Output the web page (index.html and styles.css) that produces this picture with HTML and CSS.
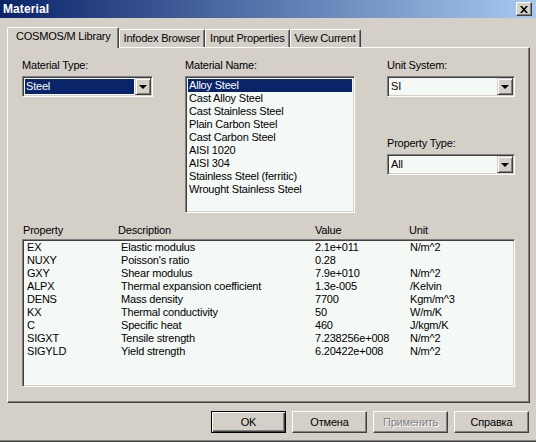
FILE: index.html
```html
<!DOCTYPE html>
<html>
<head>
<meta charset="utf-8">
<link rel="stylesheet" href="styles.css">
</head>
<body>
<div class="window">
  <div class="titlebar">
    <span class="title">Material</span>
    <span class="close"><svg width="8" height="7" viewBox="0 0 8 7"><path d="M0 0h2l2 2.2L6 0h2L5 3.5 8 7H6L4 4.8 2 7H0l3-3.5z" fill="#000"/></svg></span>
  </div>
  <div class="tabstrip">
    <div class="tab active">COSMOS/M Library</div>
    <div class="tab">Infodex Browser</div>
    <div class="tab">Input Properties</div>
    <div class="tab">View Current</div>
  </div>
  <div class="panel">
    <div class="top">
      <div class="col col1">
        <div class="label">Material Type:</div>
        <div class="combo">
          <div class="field"><span class="value sel">Steel</span></div>
          <div class="arrow"><i></i></div>
        </div>
      </div>
      <div class="col col2">
        <div class="label">Material Name:</div>
        <div class="listbox">
          <div class="item sel">Alloy Steel</div>
          <div class="item">Cast Alloy Steel</div>
          <div class="item">Cast Stainless Steel</div>
          <div class="item">Plain Carbon Steel</div>
          <div class="item">Cast Carbon Steel</div>
          <div class="item">AISI 1020</div>
          <div class="item">AISI 304</div>
          <div class="item">Stainless Steel (ferritic)</div>
          <div class="item">Wrought Stainless Steel</div>
        </div>
      </div>
      <div class="col col3">
        <div class="label">Unit System:</div>
        <div class="combo">
          <div class="field"><span class="value">SI</span></div>
          <div class="arrow"><i></i></div>
        </div>
        <div class="label second">Property Type:</div>
        <div class="combo">
          <div class="field"><span class="value">All</span></div>
          <div class="arrow"><i></i></div>
        </div>
      </div>
    </div>
    <div class="props">
      <div class="phead">
        <span>Property</span><span>Description</span><span>Value</span><span>Unit</span>
      </div>
      <div class="plist">
        <div class="prow"><span>EX</span><span>Elastic modulus</span><span>2.1e+011</span><span>N/m^2</span></div>
        <div class="prow"><span>NUXY</span><span>Poisson's ratio</span><span>0.28</span><span></span></div>
        <div class="prow"><span>GXY</span><span>Shear modulus</span><span>7.9e+010</span><span>N/m^2</span></div>
        <div class="prow"><span>ALPX</span><span>Thermal expansion coefficient</span><span>1.3e-005</span><span>/Kelvin</span></div>
        <div class="prow"><span>DENS</span><span>Mass density</span><span>7700</span><span>Kgm/m^3</span></div>
        <div class="prow"><span>KX</span><span>Thermal conductivity</span><span>50</span><span>W/m/K</span></div>
        <div class="prow"><span>C</span><span>Specific heat</span><span>460</span><span>J/kgm/K</span></div>
        <div class="prow"><span>SIGXT</span><span>Tensile strength</span><span>7.238256e+008</span><span>N/m^2</span></div>
        <div class="prow"><span>SIGYLD</span><span>Yield strength</span><span>6.20422e+008</span><span>N/m^2</span></div>
      </div>
    </div>
  </div>
  <div class="buttons">
    <div class="btn default"><span>OK</span></div>
    <div class="btn"><span>Отмена</span></div>
    <div class="btn disabled"><span>Применить</span></div>
    <div class="btn"><span>Справка</span></div>
  </div>
</div>
</body>
</html>
```
FILE: styles.css
```css
* { box-sizing: border-box; }
html, body { margin: 0; padding: 0; background: #d4d0c8; }
body {
  font-family: "Liberation Sans", Arial, sans-serif;
  font-size: 11px;
  letter-spacing: -0.2px;
  color: #000;
}
.window {
  width: 536px;
  height: 442px;
  display: flex;
  flex-direction: column;
  background: #d4d0c8;
  border-bottom: 1px solid #404040;
  box-shadow: inset 0 -1px 0 #808080;
  overflow: hidden;
}
.titlebar {
  height: 18px;
  flex: none;
  display: flex;
  align-items: center;
  justify-content: space-between;
  padding: 0 4px 0 3px;
  background: linear-gradient(to right, #0a246a, #a6caf0);
}
.title {
  color: #fff;
  font-weight: bold;
  font-size: 12px;
  letter-spacing: 0.1px;
}
.close {
  width: 16px;
  height: 14px;
  display: flex;
  align-items: center;
  justify-content: center;
  background: #d4d0c8;
  border: 1px solid;
  border-color: #fff #404040 #404040 #fff;
  box-shadow: inset -1px -1px 0 #808080;
}
.tabstrip {
  flex: none;
  height: 20px;
  margin-top: 9px;
  padding-left: 7px;
  display: flex;
  align-items: flex-end;
  position: relative;
  z-index: 1;
}
.tab {
  height: 18px;
  line-height: 16px;
  padding: 0 4px 0 4px;
  border: 1px solid;
  border-bottom: none;
  border-color: #fff #404040 transparent #fff;
  border-radius: 2px 2px 0 0;
  box-shadow: inset -1px 0 0 #808080;
  white-space: nowrap;
}
.tab.active {
  height: 21px;
  margin-bottom: -1px;
  padding: 0 7px 0 8px;
  line-height: 17px;
  background: #d4d0c8;
}
.panel {
  flex: none;
  height: 356px;
  margin: 0 6px 0 7px;
  padding: 11px 14px 15px 14px;
  border: 1px solid;
  border-color: #fff #404040 #404040 #fff;
  box-shadow: inset -1px -1px 0 #808080;
  display: flex;
  flex-direction: column;
}
.top {
  display: flex;
  justify-content: space-between;
}
.col { display: flex; flex-direction: column; }
.col1 { width: 131px; }
.col2 { width: 170px; }
.col3 { width: 128px; }
.label {
  height: 13px;
  line-height: 13px;
  margin-bottom: 4px;
  white-space: nowrap;
}
.label.second { margin-top: 40px; }
.combo {
  height: 21px;
  display: flex;
  border: 1px solid;
  border-color: #808080 #fff #fff #808080;
  background: #f5f9f5;
  box-shadow: inset 1px 1px 0 #404040, inset -1px -1px 0 #d4d0c8;
  padding: 1px;
}
.field {
  flex: 1;
  display: flex;
  padding: 1px;
}
.value {
  flex: 1;
  line-height: 15px;
  padding-left: 1px;
}
.value.sel {
  background: #0a246a;
  color: #fff;
}
.arrow {
  width: 16px;
  height: 17px;
  background: #d4d0c8;
  border: 1px solid;
  border-color: #d4d0c8 #404040 #404040 #d4d0c8;
  box-shadow: inset 1px 1px 0 #fff, inset -1px -1px 0 #808080;
  display: flex;
  align-items: center;
  justify-content: center;
}
.arrow i {
  width: 0;
  height: 0;
  border-left: 4px solid transparent;
  border-right: 4px solid transparent;
  border-top: 4px solid #000;
}
.listbox {
  height: 137px;
  border: 1px solid;
  border-color: #808080 #fff #fff #808080;
  box-shadow: inset 1px 1px 0 #404040, inset -1px -1px 0 #d4d0c8;
  background: #f5f9f5;
  padding: 2px 2px;
}
.item {
  height: 13px;
  line-height: 13px;
  padding-left: 1px;
  white-space: nowrap;
}
.item.sel {
  background: #0a246a;
  color: #fff;
}
.props {
  margin-top: 11px;
  display: flex;
  flex-direction: column;
}
.phead {
  height: 13px;
  line-height: 13px;
  margin-bottom: 2px;
  padding-left: 1px;
  display: grid;
  grid-template-columns: 95px 197px 94px 1fr;
}
.plist {
  height: 148px;
  border: 1px solid;
  border-color: #808080 #fff #fff #808080;
  box-shadow: inset 1px 1px 0 #404040, inset -1px -1px 0 #d4d0c8;
  background: #f5f9f5;
  padding: 1px 2px 2px 4px;
}
.prow {
  height: 13px;
  line-height: 13px;
  display: grid;
  grid-template-columns: 94px 194px 95px 1fr;
  white-space: nowrap;
}
.buttons {
  flex: none;
  margin-top: 8px;
  padding-right: 7px;
  display: flex;
  justify-content: flex-end;
  gap: 6px;
}
.btn {
  width: 75px;
  height: 22px;
  border: 1px solid;
  border-color: #fff #404040 #404040 #fff;
  box-shadow: inset -1px -1px 0 #808080;
  display: flex;
  align-items: center;
  justify-content: center;
  line-height: 13px;
}
.btn.default {
  border: 1px solid #000;
  box-shadow: inset 1px 1px 0 #fff, inset -1px -1px 0 #404040, inset -2px -2px 0 #808080;
}
.btn.disabled {
  color: #808080;
  text-shadow: 1px 1px 0 #fff;
}
```
